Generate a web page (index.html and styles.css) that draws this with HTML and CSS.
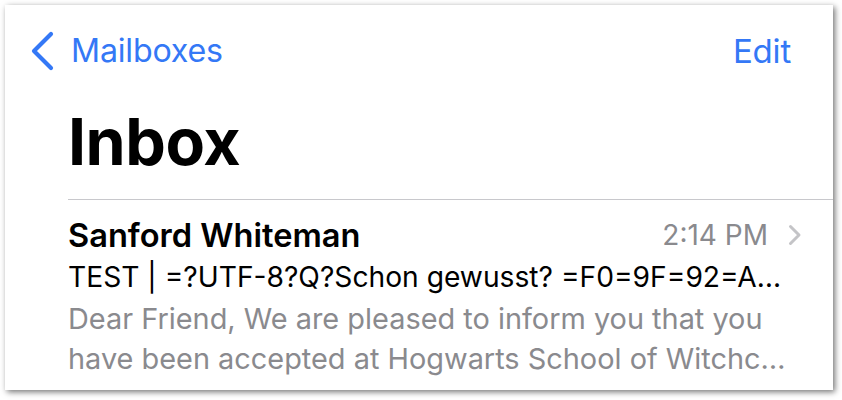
FILE: index.html
```html
<!DOCTYPE html>
<html>
<head>
<meta charset="utf-8">
<link rel="stylesheet" href="styles.css">
</head>
<body>
<div class="card">
  <div class="nav">
    <a class="back">
      <svg class="back-icon" width="24" height="40" viewBox="0 0 24 40"><path d="M21 3 L4 20 L21 37" fill="none" stroke="#3478f6" stroke-width="4.2" stroke-linecap="round" stroke-linejoin="round"/></svg>
      <span class="back-label">Mailboxes</span>
    </a>
    <span class="edit">Edit</span>
  </div>
  <div class="title">Inbox</div>
  <div class="row">
    <div class="row-head">
      <span class="sender">Sanford Whiteman</span>
      <span class="time">2:14 PM</span>
      <svg class="disclosure" width="14" height="22" viewBox="0 0 14 22"><path d="M2.5 2.5 L11 11 L2.5 19.5" fill="none" stroke="#c4c4c7" stroke-width="3" stroke-linecap="round" stroke-linejoin="round"/></svg>
    </div>
    <div class="subject">TEST | =?UTF-8?Q?Schon gewusst? =F0=9F=92=A0=F0=9F=93=9A Hogwarts?=</div>
    <div class="preview">Dear Friend, We are pleased to inform you that you</div>
    <div class="preview">have been accepted at Hogwarts School of Witchcraft and Wizardry. Please find enclosed a list of all necessary books and equipment.</div>
  </div>
</div>
</body>
</html>
```

FILE: styles.css
```css
html, body {
  margin: 0;
  padding: 0;
  background: #ffffff;
}
body {
  font-family: Inter, "Noto Sans", "Liberation Sans", sans-serif;
  padding: 5px 9px 10px 5px;
}
.card {
  width: 828px;
  height: 385px;
  background: #ffffff;
  box-shadow: 2px 2px 6px rgba(0, 0, 0, 0.55);
  box-sizing: border-box;
  overflow: hidden;
}
.nav {
  height: 92px;
  display: flex;
  align-items: center;
  justify-content: space-between;
  padding: 0 42px 0 25px;
}
.back {
  display: flex;
  align-items: center;
  gap: 17px;
  color: #3478f6;
}
.back-icon {
  display: block;
}
.back-label, .edit {
  font-size: 32.2px;
  line-height: 40px;
  color: #3478f6;
  letter-spacing: -0.2px;
}
.edit {
  font-size: 33px;
}
.title {
  font-size: 64.5px;
  font-weight: 700;
  line-height: 82px;
  padding: 4px 0 16px 63px;
  letter-spacing: -0.5px;
  color: #000;
}
.row {
  border-top: 1px solid #c8c8cc;
  margin-left: 63px;
  padding: 15px 42px 0 0;
}
.row-head {
  display: flex;
  align-items: center;
  height: 40px;
}
.sender {
  flex: 1;
  font-size: 32.6px;
  font-weight: 600;
  line-height: 40px;
  color: #000;
}
.time {
  font-size: 28px;
  line-height: 40px;
  color: #8a8a8e;
}
.disclosure {
  display: block;
  margin: 0 -11px 0 20px;
}
.subject {
  font-size: 28.2px;
  line-height: 40px;
  margin-top: 2px;
  color: #000;
  white-space: nowrap;
  overflow: hidden;
  text-overflow: ellipsis;
}
.preview {
  font-size: 28.9px;
  line-height: 40px;
  color: #8a8a8e;
  white-space: nowrap;
  overflow: hidden;
  text-overflow: ellipsis;
}
.subject + .preview {
  margin-top: 2px;
}
```
